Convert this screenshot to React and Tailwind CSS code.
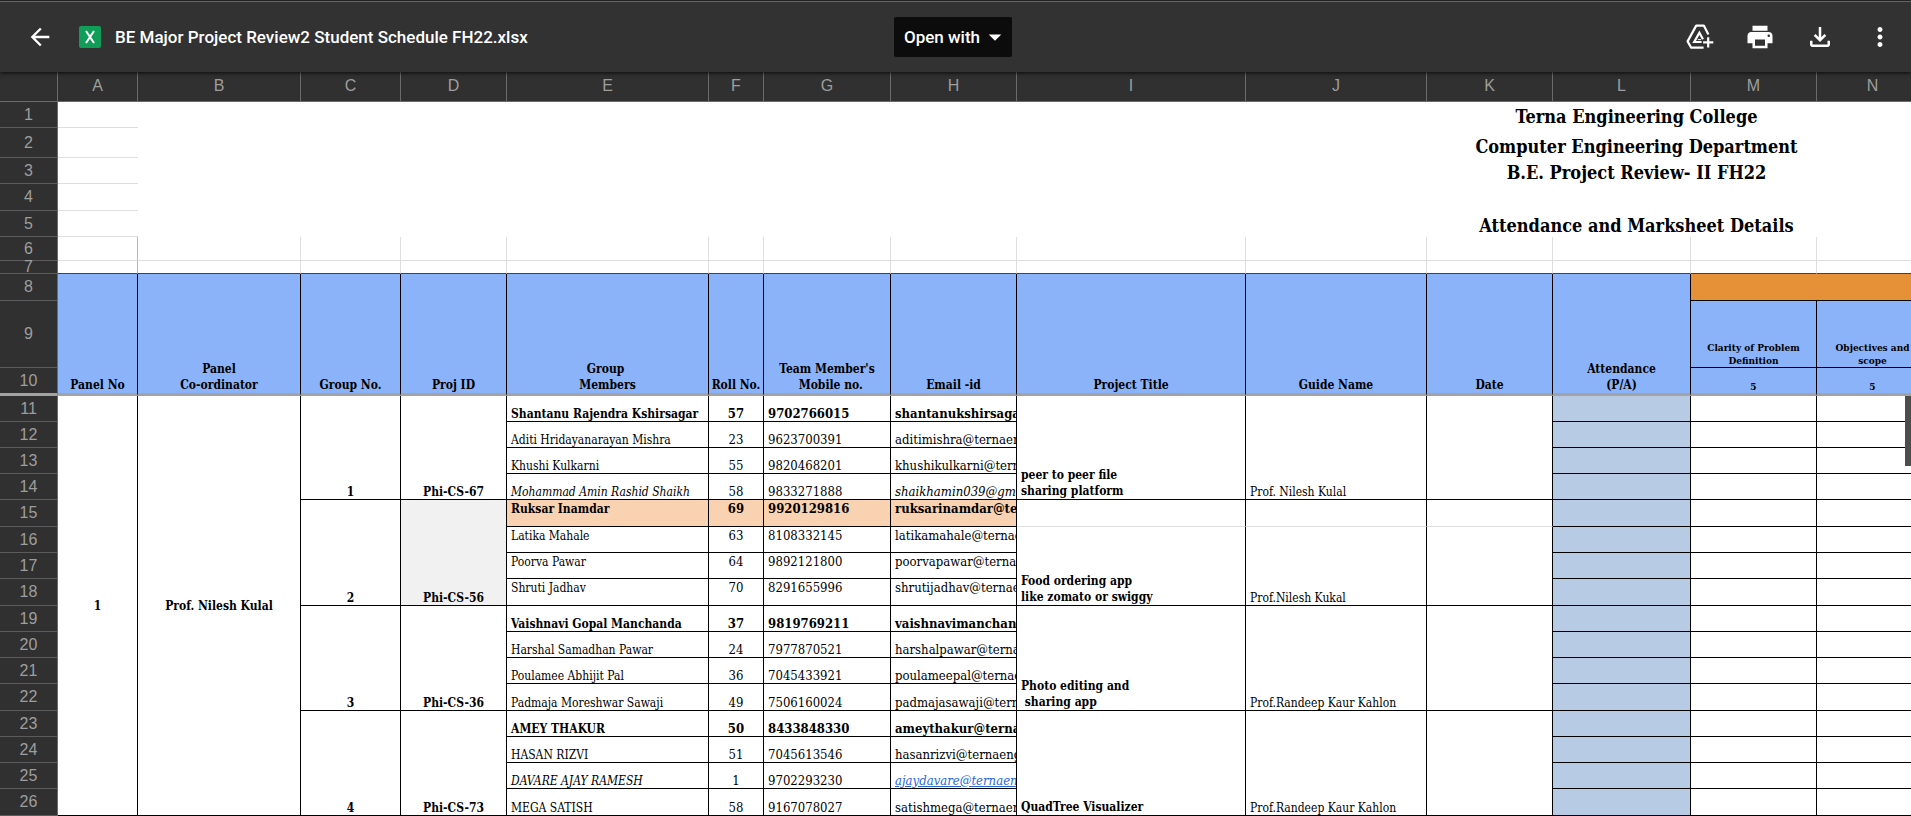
import { MdArrowBack, MdArrowDropDown, MdMoreVert, MdOutlineFileDownload, MdPrint } from "react-icons/md";

const COLUMNS = [
  ["A", "w-[80px]"],
  ["B", "w-[163px]"],
  ["C", "w-[100px]"],
  ["D", "w-[106px]"],
  ["E", "w-[202px]"],
  ["F", "w-[55px]"],
  ["G", "w-[127px]"],
  ["H", "w-[126px]"],
  ["I", "w-[229px]"],
  ["J", "w-[181px]"],
  ["K", "w-[126px]"],
  ["L", "w-[138px]"],
  ["M", "w-[126px]"],
  ["N", "w-[112px]"],
  ["", "w-[1206px]"],
];

const TITLES = [
  { row: 1, height: "h-[26px]", text: "Terna Engineering College" },
  { row: 2, height: "h-[30px]", text: "Computer Engineering Department" },
  { row: 3, height: "h-[26px]", text: "B.E. Project Review- II FH22" },
  { row: 4, height: "h-[27px]", text: "" },
  { row: 5, height: "h-[26px]", text: "Attendance and Marksheet Details" },
];

const HEADINGS = [
  "Panel No",
  "Panel\nCo-ordinator",
  "Group No.",
  "Proj ID",
  "Group \nMembers",
  "Roll No.",
  "Team Member's\n  Mobile no.",
  "Email -id",
  "Project Title",
  "Guide Name",
  "Date",
  "Attendance\n(P/A)",
];

const GROUPS = [
  {
    no: 1,
    id: "Phi-CS-67",
    title: "peer to peer file\nsharing platform",
    guide: "Prof. Nilesh Kulal",
    heights: ["h-[26px]", "h-[26px]", "h-[26px]", "h-[26px]"],
    members: [
      ["Shantanu Rajendra Kshirsagar", 57, "9702766015", "shantanukshirsaga", "bold"],
      ["Aditi Hridayanarayan Mishra", 23, "9623700391", "aditimishra@ternaen"],
      ["Khushi Kulkarni", 55, "9820468201", "khushikulkarni@tern"],
      ["Mohammad Amin Rashid Shaikh", 58, "9833271888", "shaikhamin039@gm", "italic"],
    ],
  },
  {
    no: 2,
    id: "Phi-CS-56",
    title: "Food ordering app\nlike zomato or swiggy",
    guide: "Prof.Nilesh Kukal",
    shaded: true,
    heights: ["h-[27px]", "h-[26px]", "h-[26px]", "h-[27px]"],
    members: [
      ["Ruksar Inamdar", 69, "9920129816", "ruksarinamdar@te", "bold"],
      ["Latika Mahale", 63, "8108332145", "latikamahale@ternae"],
      ["Poorva Pawar", 64, "9892121800", "poorvapawar@terna"],
      ["Shruti Jadhav", 70, "8291655996", "shrutijadhav@ternae"],
    ],
  },
  {
    no: 3,
    id: "Phi-CS-36",
    title: "Photo editing and\n sharing app",
    guide: "Prof.Randeep Kaur Kahlon",
    heights: ["h-[26px]", "h-[26px]", "h-[26px]", "h-[27px]"],
    members: [
      ["Vaishnavi Gopal Manchanda", 37, "9819769211", "vaishnavimanchan", "bold"],
      ["Harshal Samadhan Pawar", 24, "7977870521", "harshalpawar@terna"],
      ["Poulamee Abhijit Pal", 36, "7045433921", "poulameepal@ternae"],
      ["Padmaja Moreshwar Sawaji", 49, "7506160024", "padmajasawaji@tern"],
    ],
  },
  {
    no: 4,
    id: "Phi-CS-73",
    title: "QuadTree Visualizer",
    guide: "Prof.Randeep Kaur Kahlon",
    heights: ["h-[26px]", "h-[26px]", "h-[26px]", "h-[27px]"],
    members: [
      ["AMEY THAKUR", 50, "8433848330", "ameythakur@terna", "bold"],
      ["HASAN RIZVI", 51, "7045613546", "hasanrizvi@ternaeng"],
      ["DAVARE AJAY RAMESH", 1, "9702293230", "ajaydavare@ternaen", "italic", "link"],
      ["MEGA SATISH", 58, "9167078027", "satishmega@ternaen"],
    ],
  },
];

function RowNumber({ n, frozen }) {
  return (
    <th
      scope="row"
      className={`border-r border-r-[#6b6b6b] bg-[#303030] font-['Liberation_Sans',sans-serif] text-[16px]/[12px] font-normal text-[#9e9e9e] align-middle ${
        frozen ? "border-b-[3px] border-b-[#a3a3a3]" : "border-b border-b-[#5c5c5c]"
      }`}
    >
      {n}
    </th>
  );
}

function IconButton({ label, children }) {
  return (
    <button type="button" aria-label={label} className="grid size-10 place-items-center text-white">
      {children}
    </button>
  );
}

function AddToDriveIcon() {
  return (
    <svg viewBox="0 0 28 26" className="h-[26px] w-[28px]" fill="none" stroke="currentColor" strokeWidth="2.2" aria-hidden="true">
      <path d="M17.6 23.7H5.2L1.6 17.4L10.2 1.6H17.8L22.4 10.4" strokeLinejoin="round" />
      <path d="M15.6 18H8.2L13.4 8.8L17 15.2" />
      <path d="M11.8 15.6H15" strokeWidth="1" />
      <path d="M22.2 13.2V23.4M17.1 18.3H27.3" />
    </svg>
  );
}

function Toolbar() {
  return (
    <header className="relative z-10 grid h-[72px] shrink-0 grid-cols-[1fr_auto_1fr] items-center border-t border-[#222222] bg-[#323232] pl-1.5 pr-[11px] font-['Roboto',sans-serif] text-white shadow-[0_1px_4px_rgba(0,0,0,0.8),inset_0_1px_0_#666666]">
      <div className="flex items-center pl-3.5">
        <IconButton label="Back">
          <MdArrowBack size={28} />
        </IconButton>
        <svg viewBox="0 0 22 22" className="ml-[19px] size-[22px]" aria-hidden="true">
          <rect width="22" height="22" rx="2" fill="#0f9d58" />
          <path d="M7 5l8 12M15 5L7 17" stroke="#fff" strokeWidth="2" fill="none" />
        </svg>
        <h1 className="ml-3.5 text-[17px]/[24px] font-medium whitespace-nowrap">
          BE Major Project Review2 Student Schedule FH22.xlsx
        </h1>
      </div>
      <button type="button" className="flex h-10 items-center rounded-xs bg-[#0c0c0c] pl-2.5 pr-0.5 text-[17px]/[24px] font-medium">
        Open with
        <MdArrowDropDown size={30} />
      </button>
      <div className="flex items-center justify-end gap-5">
        <IconButton label="Add shortcut to Drive">
          <AddToDriveIcon />
        </IconButton>
        <IconButton label="Print">
          <MdPrint size={30} />
        </IconButton>
        <IconButton label="Download">
          <MdOutlineFileDownload size={30} />
        </IconButton>
        <IconButton label="More actions">
          <MdMoreVert size={30} />
        </IconButton>
      </div>
    </header>
  );
}

const GRID = "border-r border-b border-r-black border-b-[#dedede]";
const INK = "border-b border-r border-black";
const HEAD = "border-r border-b-[3px] border-r-black border-b-[#a3a3a3] bg-[#8ab3f9] align-bottom whitespace-pre";
const CRITERION = `${INK} bg-[#8ab3f9] align-bottom text-[10px]/[13px] whitespace-pre`;

function SpacerRow({ n, height, last }) {
  return (
    <tr className={height}>
      <RowNumber n={n} />
      {COLUMNS.map(([name]) => (
        <td
          key={name}
          className={`border-r border-b ${name === "A" ? "border-r-[#b7b7b7]" : "border-r-[#dedede]"} ${
            last ? "border-b-[#3b4250]" : "border-b-[#dedede]"
          }`}
        />
      ))}
    </tr>
  );
}

function GroupRows({ group, index }) {
  const { no, id, title, guide, shaded, heights, members } = group;
  const first = 11 + index * 4;

  return members.map(([name, roll, phone, email, style, link], i) => {
    const face = style === "bold" ? "font-bold" : "";
    const slant = style === "italic" ? "italic" : "";
    const fill = shaded && i === 0 ? "bg-[#f9d2b2]" : "";
    const valign = shaded ? "pt-0.5 align-top" : "align-bottom";
    const cell = `${INK} ${face} ${fill} ${valign}`;
    const split = shaded && i === 0;
    const opensMerge = shaded ? i === 1 : i === 0;
    const span = shaded ? 3 : 4;

    return (
      <tr key={name} className={`${heights[i]} leading-[14px]`}>
        <RowNumber n={first + i} />
        {first + i === 11 && (
          <>
            <td rowSpan={16} className={`${INK} text-center align-middle font-bold`}>1</td>
            <td rowSpan={16} className={`${INK} text-center align-middle font-bold`}>Prof. Nilesh Kulal</td>
          </>
        )}
        {i === 0 && (
          <>
            <td rowSpan={4} className={`${INK} text-center align-bottom font-bold`}>{no}</td>
            <td rowSpan={4} className={`${INK} text-center align-bottom font-bold ${shaded ? "bg-[#f1f1f1]" : ""}`}>{id}</td>
          </>
        )}
        <td className={`${cell} ${slant} pl-1 whitespace-nowrap`}>{name}</td>
        <td className={`${cell} text-center text-[13px]/[14px]`}>{roll}</td>
        <td className={`${cell} px-1 text-[13px]/[14px]`}>{phone}</td>
        <td className={`${cell} ${slant} overflow-hidden pl-1 text-[13px]/[14px] whitespace-nowrap`}>
          {link ? <a href={`mailto:${email}`} className="text-[#2a66d8] underline">{email}</a> : email}
        </td>
        {split && (
          <>
            <td className={GRID} />
            <td className={GRID} />
            <td className={GRID} />
          </>
        )}
        {opensMerge && (
          <>
            <td rowSpan={span} className={`${INK} px-1 align-bottom leading-[16px] font-bold whitespace-pre`}>{title}</td>
            <td rowSpan={span} className={`${INK} px-1 align-bottom whitespace-nowrap`}>{guide}</td>
            <td rowSpan={span} className={INK} />
          </>
        )}
        <td className={`${INK} bg-[#b7cce4]`} />
        <td className={INK} />
        <td className={INK} />
        <td className={INK} />
      </tr>
    );
  });
}

function Sheet() {
  return (
    <table className="w-[3135px] table-fixed border-separate border-spacing-0 text-[12px]/[16px]">
      <colgroup>
        <col className="w-[58px]" />
        {COLUMNS.map(([name, width]) => (
          <col key={name} className={width} />
        ))}
      </colgroup>
      <thead>
        <tr className="h-[30px]">
          <th className="border-r border-b border-[#6b6b6b] bg-[#303030]" />
          {COLUMNS.map(([name]) => (
            <th
              key={name}
              scope="col"
              className="border-r border-b border-[#6b6b6b] bg-[#303030] pb-0.5 font-['Liberation_Sans',sans-serif] text-[16px]/[18px] font-normal text-[#9e9e9e]"
            >
              {name}
            </th>
          ))}
        </tr>
      </thead>
      <tbody>
        {TITLES.map(({ row, height, text }) => (
          <tr key={row} className={height}>
            <RowNumber n={row} />
            <td className="border-b border-[#dedede]" />
            <td colSpan={14} className="text-center align-bottom text-[18px]/[22px] font-bold">{text}</td>
          </tr>
        ))}
        <SpacerRow n={6} height="h-[24px]" />
        <SpacerRow n={7} height="h-[13px]" last />
        <tr className="h-[27px]">
          <RowNumber n={8} />
          {HEADINGS.map((text) => (
            <th key={text} scope="col" rowSpan={3} className={HEAD}>{text}</th>
          ))}
          <th colSpan={3} className="border-b border-black bg-[#e69138]" />
        </tr>
        <tr className="h-[67px]">
          <RowNumber n={9} />
          <th scope="col" className={CRITERION}>{"Clarity of Problem\nDefinition"}</th>
          <th scope="col" className={CRITERION}>{"Objectives and\nscope"}</th>
          <th className={CRITERION} />
        </tr>
        <tr className="h-[28px]">
          <RowNumber n={10} frozen />
          <th className={`${HEAD} text-[10px]/[13px]`}>5</th>
          <th className={`${HEAD} text-[10px]/[13px]`}>5</th>
          <th className={HEAD} />
        </tr>
        {GROUPS.map((group, index) => (
          <GroupRows key={group.id} group={group} index={index} />
        ))}
      </tbody>
    </table>
  );
}

export default function App() {
  return (
    <div className="flex h-screen flex-col overflow-hidden bg-white font-['DejaVu_Serif_Condensed','DejaVu_Serif',serif] text-black">
      <Toolbar />
      <main className="relative min-h-0 flex-1 overflow-hidden">
        <Sheet />
        <div className="absolute top-[324px] right-0 h-[70px] w-1.5 bg-[#4d4d4d]" />
      </main>
    </div>
  );
}
